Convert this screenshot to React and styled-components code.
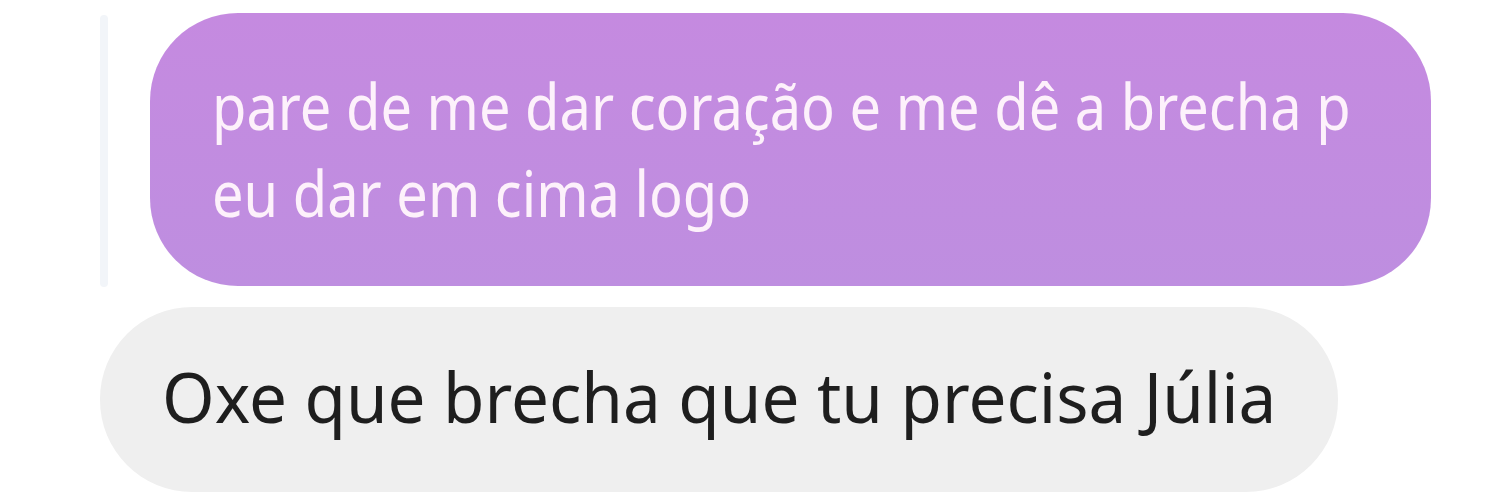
import React from "react";
import styled, { createGlobalStyle } from "styled-components";

const Global = createGlobalStyle`
  html, body { margin: 0; padding: 0; background: #ffffff; }
  body { font-family: "Noto Sans", "Open Sans", sans-serif; }
`;

const Thread = styled.div`
  display: flex;
  flex-direction: column;
  gap: 21px;
  padding: 13px 0 0 100px;
  width: 1500px;
  height: 500px;
  box-sizing: border-box;
`;

const ReplyRow = styled.div`
  display: flex;
  align-items: stretch;
  gap: 42px;
`;

const ReplyLine = styled.div`
  width: 8px;
  margin: 2px 0 -1px;
  border-radius: 4px;
  background: #f2f5f9;
`;

const Bubble = styled.div`
  box-sizing: border-box;
  width: ${(p) => p.$width}px;
  height: ${(p) => p.$height}px;
  padding: ${(p) => p.$padTop}px ${(p) => p.$padX}px 0;
  border-radius: ${(p) => p.$radius}px;
  background: ${(p) => p.$bg};
  color: ${(p) => p.$fg};
  font-size: ${(p) => p.$size}px;
  line-height: ${(p) => p.$lineHeight}px;
  display: flex;
  flex-direction: column;
  white-space: nowrap;
`;

const Line = styled.span`
  display: block;
  transform-origin: 0 ${(p) => p.$baseline}px;
  transform: scaleY(${(p) => p.$scaleY});
`;

export default function App() {
  return (
    <>
      <Global />
      <Thread>
        <ReplyRow>
          <ReplyLine />
          <Bubble
            $width={1281}
            $height={273}
            $padX={62}
            $padTop={52}
            $radius={88}
            $bg="linear-gradient(180deg, #c58ae0 0%, #be8ee0 100%)"
            $fg="#fdf1fb"
            $size={56}
            $lineHeight={87}
          >
            <Line $baseline={66} $scaleY={1.14}>pare de me dar coração e me dê a brecha p</Line>
            <Line $baseline={66} $scaleY={1.14}>eu dar em cima logo</Line>
          </Bubble>
        </ReplyRow>
        <Bubble
          $width={1238}
          $height={185}
          $padX={62}
          $padTop={45}
          $radius={92}
          $bg="#efefef"
          $fg="#1e1e1e"
          $size={67.4}
          $lineHeight={90}
        >
          <Line $baseline={71} $scaleY={1.03}>Oxe que brecha que tu precisa Júlia</Line>
        </Bubble>
      </Thread>
    </>
  );
}
